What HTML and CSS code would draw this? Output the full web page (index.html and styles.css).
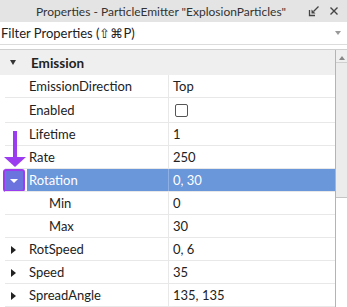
FILE: index.html
```html
<!DOCTYPE html>
<html lang="en">
<head>
    <meta charset="UTF-8">
    <title>Properties</title>
    <link rel="stylesheet" href="styles.css">
</head>
<body>
    <div class="panel">
        <div class="titlebar">
            <span class="title">Properties - ParticleEmitter "ExplosionParticles"</span>
            <svg class="tb-icon dock" width="12" height="12" viewBox="0 0 12 12">
                <path d="M1.5 5v5.5H7" fill="none" stroke="#444" stroke-width="1.3"/>
                <path d="M10.5 1.5L5.5 6.5" stroke="#444" stroke-width="1.3"/>
                <path d="M3.5 4.5v4h4z" fill="#444"/>
            </svg>
            <svg class="tb-icon close" width="10" height="10" viewBox="0 0 10 10">
                <path d="M1.5 1.5l7 7M8.5 1.5l-7 7" stroke="#444" stroke-width="1.4"/>
            </svg>
        </div>

        <div class="filter">
            <span>Filter Properties (⇧⌘P)</span>
            <span class="filter-caret"></span>
        </div>

        <div class="body">
            <div class="grid">
                <div class="section">
                    <span class="tri-down"></span>
                    <span class="section-name">Emission</span>
                </div>

                <div class="row"><span class="exp"></span><span class="name">EmissionDirection</span><span class="value">Top</span></div>
                <div class="row tall"><span class="exp"></span><span class="name">Enabled</span><span class="value"><span class="checkbox"></span></span></div>
                <div class="row"><span class="exp"></span><span class="name">Lifetime</span><span class="value">1</span></div>
                <div class="row"><span class="exp"></span><span class="name">Rate</span><span class="value">250</span></div>
                <div class="row selected"><span class="exp"><span class="exp-btn"><span class="tri-white"></span></span></span><span class="name">Rotation</span><span class="value">0, 30</span></div>
                <div class="row"><span class="exp"></span><span class="name sub">Min</span><span class="value">0</span></div>
                <div class="row"><span class="exp"></span><span class="name sub">Max</span><span class="value">30</span></div>
                <div class="row"><span class="exp"><span class="tri-right"></span></span><span class="name">RotSpeed</span><span class="value">0, 6</span></div>
                <div class="row"><span class="exp"><span class="tri-right"></span></span><span class="name">Speed</span><span class="value">35</span></div>
                <div class="row"><span class="exp"><span class="tri-right"></span></span><span class="name">SpreadAngle</span><span class="value">135, 135</span></div>
            </div>

            <div class="scrollbar">
                <div class="scroll-up"><span class="tri-up"></span></div>
                <div class="thumb"></div>
            </div>
        </div>

        <div class="pointer">
            <div class="shaft"></div>
            <div class="head"></div>
        </div>
    </div>
</body>
</html>
```

FILE: styles.css
```css
html, body {
    margin: 0;
    padding: 0;
    background: white;
}
body {
    font-family: Lato, "Noto Sans", sans-serif;
    color: #222;
    width: 347px;
    height: 307px;
    overflow: hidden;
}
.panel {
    position: relative;
}
.titlebar {
    height: 22px;
    background: #e4e4e4;
    display: flex;
    align-items: center;
    font-size: 12px;
    color: #333;
}
.title {
    flex: 1;
    text-align: center;
    padding-left: 14px;
}
.tb-icon {
    flex: none;
}
.dock {
    margin-right: 9px;
}
.close {
    margin-right: 8px;
}
.filter {
    height: 22px;
    display: flex;
    align-items: center;
    justify-content: space-between;
    padding: 0 6px 0 1px;
    font-size: 13px;
    border-bottom: 1px solid #dcdcdc;
}
.filter-caret {
    width: 0;
    height: 0;
    border-left: 3.5px solid transparent;
    border-right: 3.5px solid transparent;
    border-top: 4px solid #999;
}
.body {
    margin-top: 4px;
    border-top: 1px solid #cfcfcf;
    display: flex;
}
.grid {
    width: 335px;
}
.section {
    height: 25px;
    background: #efefef;
    display: flex;
    align-items: center;
    font-size: 13.5px;
    font-weight: bold;
}
.tri-down {
    width: 0;
    height: 0;
    margin: 0 15px 0 10px;
    border-left: 3.5px solid transparent;
    border-right: 3.5px solid transparent;
    border-top: 5px solid #333;
}
.row {
    height: 23px;
    display: grid;
    grid-template-columns: 27px 142px 1fr;
    font-size: 13px;
    position: relative;
}
.row::after {
    content: "";
    position: absolute;
    left: 5px;
    right: 0;
    bottom: 0;
    border-bottom: 1px solid #e8e8e8;
}
.row.tall {
    height: 25px;
}
.exp {
    display: flex;
    align-items: center;
    padding-left: 11px;
}
.name, .value {
    display: flex;
    align-items: center;
    padding-bottom: 1px;
}
.name {
    padding-left: 2px;
    border-right: 1px solid #e8e8e8;
}
.name.sub {
    padding-left: 22px;
}
.value {
    padding-left: 4px;
}
.row.selected .name,
.row.selected .value {
    background: #6a96da;
    color: white;
}
.row.selected .name {
    border-right-color: #8fb0e4;
}
.tri-right {
    width: 0;
    height: 0;
    border-top: 4px solid transparent;
    border-bottom: 4px solid transparent;
    border-left: 5px solid #222;
}
.exp-btn {
    position: absolute;
    left: 3px;
    top: 0;
    width: 18px;
    height: 19px;
    border: 2px solid #9b3cf0;
    border-radius: 3px;
    background: #6b74de;
    display: flex;
    align-items: center;
    justify-content: center;
}
.tri-white {
    width: 0;
    height: 0;
    border-left: 4px solid transparent;
    border-right: 4px solid transparent;
    border-top: 4px solid white;
}
.checkbox {
    width: 11px;
    height: 11px;
    border: 1px solid #555;
    border-radius: 2px;
    margin-left: 2px;
}
.scrollbar {
    width: 11px;
    border-left: 1px solid #b4b4b4;
    display: flex;
    flex-direction: column;
}
.scroll-up {
    height: 13px;
    background: #efefef;
    border-bottom: 1px solid #cfcfcf;
    display: flex;
    justify-content: center;
    padding-top: 6px;
    box-sizing: border-box;
}
.tri-up {
    width: 0;
    height: 0;
    border-left: 3px solid transparent;
    border-right: 3px solid transparent;
    border-bottom: 4px solid #888;
}
.thumb {
    height: 134px;
    background: #ececec;
    border-bottom: 1px solid #c4c4c4;
}
.pointer {
    position: absolute;
    left: 4px;
    top: 131px;
    width: 22px;
    display: flex;
    flex-direction: column;
    align-items: center;
}
.shaft {
    width: 4px;
    height: 26px;
    background: #9b3cf0;
}
.head {
    width: 0;
    height: 0;
    border-left: 11px solid transparent;
    border-right: 11px solid transparent;
    border-top: 10px solid #9b3cf0;
}
```
